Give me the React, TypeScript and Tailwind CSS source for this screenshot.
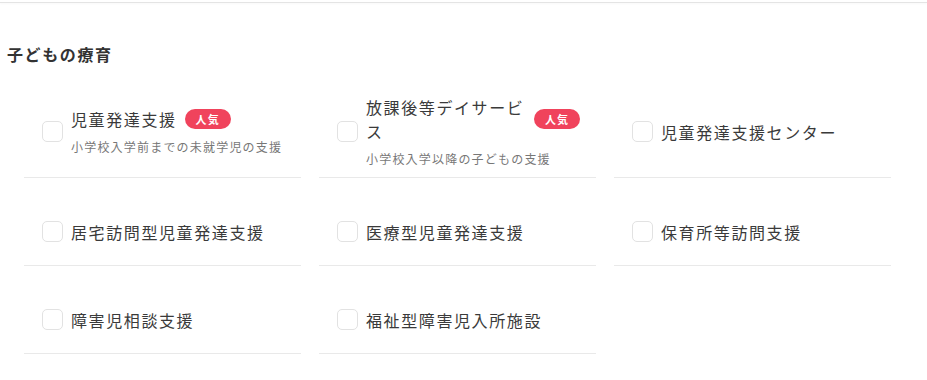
type Item = {
  label: string
  sub?: string
  popular?: boolean
}

const items: Item[] = [
  { label: '児童発達支援', sub: '小学校入学前までの未就学児の支援', popular: true },
  { label: '放課後等デイサービス', sub: '小学校入学以降の子どもの支援', popular: true },
  { label: '児童発達支援センター' },
  { label: '居宅訪問型児童発達支援' },
  { label: '医療型児童発達支援' },
  { label: '保育所等訪問支援' },
  { label: '障害児相談支援' },
  { label: '福祉型障害児入所施設' },
]

const CheckRow = ({ item }: { item: Item }) => {
  return (
    <label className="flex min-h-[68px] cursor-pointer items-center gap-[8px] border-b border-[#e9e9e9] py-[9px] pl-[18px] pr-[8px]">
      <span className="h-[21px] w-[21px] shrink-0 rounded-[5px] border-[1.5px] border-[#e2e2e2] bg-white" />
      <span className="flex flex-col">
        <span className="flex items-center gap-[8px]">
          <span
            className={
              item.popular
                ? 'max-w-[160px] text-[16px] leading-[24px] tracking-[0.1em] text-[#3a3a3a]'
                : 'whitespace-nowrap text-[16px] leading-[24px] tracking-[0.1em] text-[#3a3a3a]'
            }
          >
            {item.label}
          </span>
          {item.popular && (
            <span className="shrink-0 rounded-full bg-[#f0435c] px-[11px] text-[11px] font-bold leading-[20px] tracking-[0.1em] text-white">
              人気
            </span>
          )}
        </span>
        {item.sub && (
          <span className="mt-[7px] text-[12px] leading-[18px] tracking-[0.1em] text-[#777777]">
            {item.sub}
          </span>
        )}
      </span>
    </label>
  )
}

export default function App() {
  return (
    <div
      className="min-h-[380px] bg-white"
      style={{ fontFamily: '"Noto Sans CJK JP", "Noto Sans", sans-serif' }}
    >
      <div className="h-[2px]" />
      <div className="border-t border-[#e4e4e4] shadow-[0_1px_2px_rgba(0,0,0,0.04)]" />
      <h2 className="mt-[39px] pl-[7px] text-[16px] font-bold leading-[24px] tracking-[0.1em] text-[#333333]">
        子どもの療育
      </h2>
      <div className="mt-[20px] grid grid-cols-[repeat(3,277px)] gap-x-[18px] gap-y-[20px] pl-[24px]">
        {items.map((item) => (
          <CheckRow key={item.label} item={item} />
        ))}
      </div>
    </div>
  )
}
